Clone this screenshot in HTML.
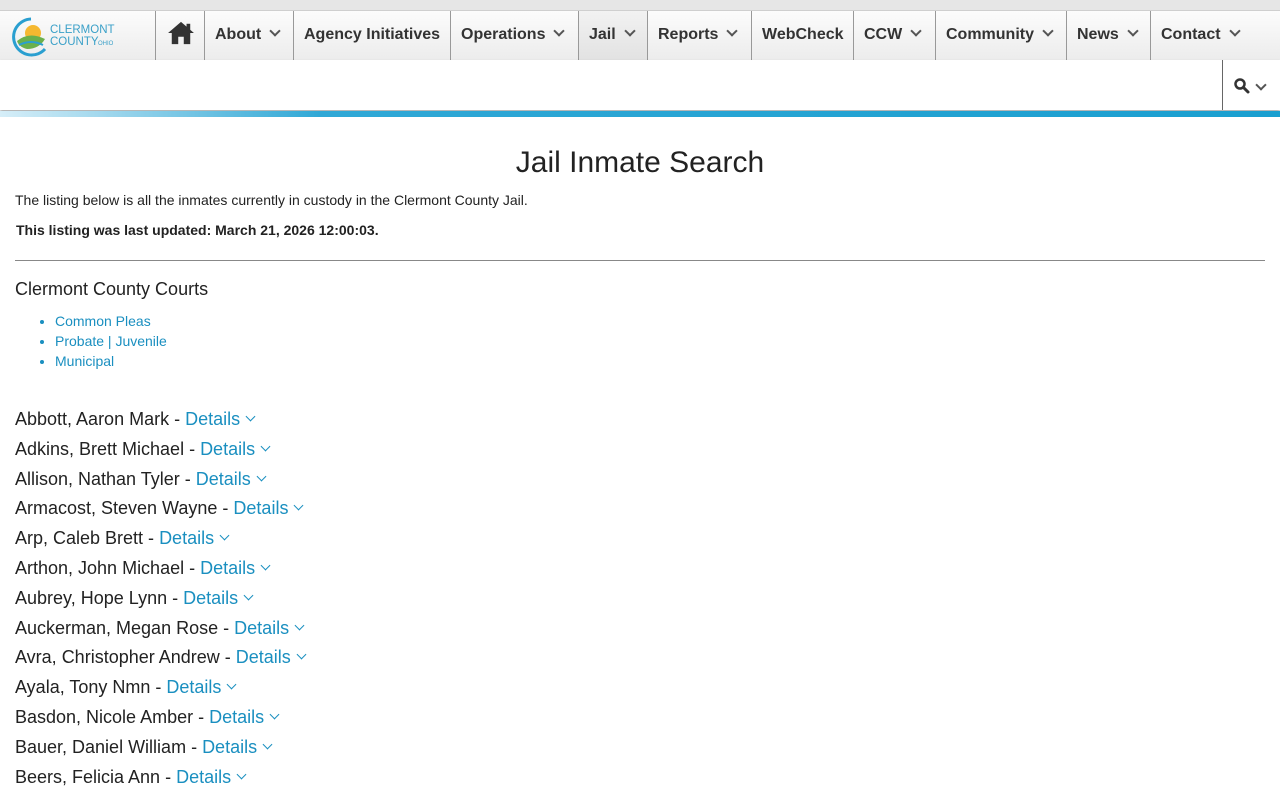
<!DOCTYPE html>
<html><head><style>
body{margin:0;width:1280px;height:800px;overflow:hidden;font-family:"Liberation Sans",Arial,sans-serif;background:#fff;color:#222}
.top{height:10px;background:#e6e6e6;border-bottom:1px solid #cfcfcf}
.nav{position:absolute;top:11px;left:0;width:1280px;height:49px;background:linear-gradient(#fcfcfc,#ececec)}
.nav .it{position:absolute;top:0;height:49px;border-left:1px solid #999;font-weight:bold;font-size:16px;color:#333;line-height:48px;box-sizing:border-box;padding-left:10px;white-space:nowrap}
.chev{display:inline-block;width:6px;height:6px;border-right:2px solid #555;border-bottom:2px solid #555;transform:rotate(45deg);margin-left:10px;position:relative;top:-4px}
.row2{position:absolute;top:60px;left:0;width:1280px;height:50px;background:#fff;box-shadow:0 2px 3px rgba(0,0,0,.35)}
.blue{position:absolute;top:111px;left:0;width:1280px;height:6px;background:linear-gradient(90deg,#d6eef8,#30a8d6 25%,#1a9fd0)}
h1{position:absolute;top:146px;left:0;width:1280px;text-align:center;font-weight:normal;font-size:30px;margin:0;color:#222}
.p1{position:absolute;top:192px;left:15px;font-size:14px}
.p2{position:absolute;top:222px;left:16px;font-size:14px;font-weight:bold}
hr{position:absolute;top:260px;left:15px;width:1250px;border:0;border-top:1px solid #888;margin:0}
.courts{position:absolute;top:279px;left:15px;font-size:18px}
ul{position:absolute;top:311px;left:15px;margin:0;padding-left:40px;font-size:14px;line-height:20px;color:#1a8fc0}
.list{position:absolute;top:405px;left:15px;font-size:18px;line-height:29.8px}
.list a{color:#1a8fc0}
.list .c{display:inline-block;width:6px;height:6px;border-right:1.5px solid #1a8fc0;border-bottom:1.5px solid #1a8fc0;transform:rotate(45deg);margin-left:7px;position:relative;top:-5px}
</style></head><body>
<div class="top"></div>
<div class="nav">
<svg style="position:absolute;left:9px;top:4px" width="112" height="42" viewBox="0 0 112 42">
<path d="M22 4 A18 18 0 1 0 36 34" fill="none" stroke="#2a9fd0" stroke-width="3"/>
<circle cx="24" cy="18" r="8" fill="#f5b830"/>
<path d="M8 26 Q20 16 36 24 Q30 34 18 34 Q10 32 8 26Z" fill="#6ab04c"/>
<path d="M10 30 Q22 24 34 30" fill="none" stroke="#2a9fd0" stroke-width="2"/>
<text x="41" y="18" font-size="11.5" fill="#3aa0c8" font-family="Liberation Sans">CLERMONT</text>
<text x="41" y="30" font-size="11.5" fill="#3aa0c8" font-family="Liberation Sans">COUNTY</text>
<text x="89" y="30" font-size="6" fill="#3aa0c8" font-family="Liberation Sans">OHIO</text>
</svg>
<div class="it" style="left:155px;width:49px"><svg width="28" height="24" viewBox="0 0 30 26" style="position:relative;top:6px;left:1px"><path d="M15 1 L29 13 L25 13 L25 25 L18 25 L18 17 L12 17 L12 25 L5 25 L5 13 L1 13Z" fill="#333"/><rect x="21" y="3" width="4" height="7" fill="#333"/></svg></div>
<div class="it" style="left:204px;width:89px">About<span class="chev"></span></div>
<div class="it" style="left:293px;width:157px">Agency Initiatives</div>
<div class="it" style="left:450px;width:128px">Operations<span class="chev"></span></div>
<div class="it" style="left:578px;width:69px;background:linear-gradient(#f2f2f2,#e2e2e2)">Jail<span class="chev"></span></div>
<div class="it" style="left:647px;width:104px">Reports<span class="chev"></span></div>
<div class="it" style="left:751px;width:102px">WebCheck</div>
<div class="it" style="left:853px;width:82px">CCW<span class="chev"></span></div>
<div class="it" style="left:935px;width:131px">Community<span class="chev"></span></div>
<div class="it" style="left:1066px;width:84px">News<span class="chev"></span></div>
<div class="it" style="left:1150px;width:130px">Contact<span class="chev"></span></div>
</div>
<div class="row2"><div style="position:absolute;left:1222px;top:0;height:50px;border-left:1px solid #666;width:58px">
<svg width="18" height="18" viewBox="0 0 18 18" style="position:absolute;left:10px;top:17px"><circle cx="7" cy="7" r="4.5" fill="none" stroke="#333" stroke-width="2.5"/><path d="M10.5 10.5 L15 15" stroke="#333" stroke-width="3" stroke-linecap="round"/></svg>
<span class="chev" style="position:absolute;left:34px;top:21px;margin:0"></span></div></div>
<div class="blue"></div>
<h1>Jail Inmate Search</h1>
<div class="p1">The listing below is all the inmates currently in custody in the Clermont County Jail.</div>
<div class="p2">This listing was last updated: March 21, 2026 12:00:03.</div>
<hr>
<div class="courts">Clermont County Courts</div>
<ul><li>Common Pleas</li><li>Probate | Juvenile</li><li>Municipal</li></ul>
<div class="list">
<div>Abbott, Aaron Mark - <a>Details</a><span class="c"></span></div>
<div>Adkins, Brett Michael - <a>Details</a><span class="c"></span></div>
<div>Allison, Nathan Tyler - <a>Details</a><span class="c"></span></div>
<div>Armacost, Steven Wayne - <a>Details</a><span class="c"></span></div>
<div>Arp, Caleb Brett - <a>Details</a><span class="c"></span></div>
<div>Arthon, John Michael - <a>Details</a><span class="c"></span></div>
<div>Aubrey, Hope Lynn - <a>Details</a><span class="c"></span></div>
<div>Auckerman, Megan Rose - <a>Details</a><span class="c"></span></div>
<div>Avra, Christopher Andrew - <a>Details</a><span class="c"></span></div>
<div>Ayala, Tony Nmn - <a>Details</a><span class="c"></span></div>
<div>Basdon, Nicole Amber - <a>Details</a><span class="c"></span></div>
<div>Bauer, Daniel William - <a>Details</a><span class="c"></span></div>
<div>Beers, Felicia Ann - <a>Details</a><span class="c"></span></div>
</div>
</body></html>
